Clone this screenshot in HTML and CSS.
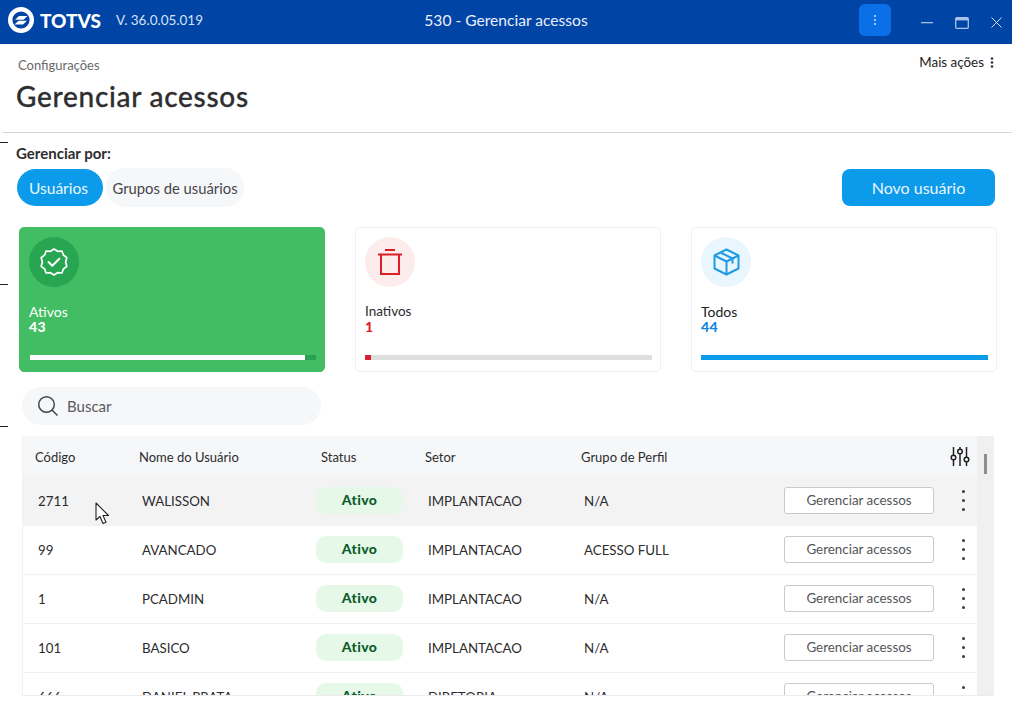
FILE: index.html
```html
<!DOCTYPE html>
<html lang="pt-BR">
<head>
<meta charset="utf-8">
<title>530 - Gerenciar acessos</title>
<link rel="stylesheet" href="styles.css">
</head>
<body>
<div class="ticks"><i></i><i></i><i></i></div>
<header class="titlebar">
  <div class="brand">
    <svg class="logo" width="26" height="26" viewBox="0 0 26 26"><circle cx="13" cy="13" r="10.800" fill="none" stroke="#fff" stroke-width="4.400"/><path d="M7 12.800 L11 9 H19.500 L15.500 12.800Z M19 13.800 L15 17.500 H6.500 L10.500 13.800Z" fill="#fff"/></svg>
    <span class="wordmark">TOTVS</span>
    <span class="version">V. 36.0.05.019</span>
  </div>
  <div class="apptitle">530 - Gerenciar acessos</div>
  <div class="winctl">
    <button class="menu-btn"><svg width="2" height="10" viewBox="0 0 2 10"><g fill="#9cc6f5"><rect y="0" width="2" height="2"/><rect y="4" width="2" height="2"/><rect y="8" width="2" height="2"/></g></svg></button>
    <svg class="ctl-min" width="12" height="2" viewBox="0 0 12 2"><rect width="12" height="1.300" fill="#a9bde0"/></svg>
    <svg class="ctl-max" width="14" height="12" viewBox="0 0 14 12"><rect x=".7" y=".7" width="12.600" height="10.600" rx="1" fill="none" stroke="#a9c2ea" stroke-width="1.300"/><rect x="1" y="1" width="12" height="2.400" fill="#a9c2ea"/></svg>
    <svg class="ctl-close" width="11" height="11" viewBox="0 0 11 11"><path d="M.5.5l10 10M10.500.5l-10 10" stroke="#d5e0f3" stroke-width="1"/></svg>
  </div>
</header>

<section class="pagehead">
  <div>
    <div class="crumb">Configurações</div>
    <h1>Gerenciar acessos</h1>
  </div>
  <div class="more">Mais ações
    <svg width="4" height="11" viewBox="0 0 4 11"><g fill="#333"><circle cx="2" cy="1.500" r="1.300"/><circle cx="2" cy="5.500" r="1.300"/><circle cx="2" cy="9.500" r="1.300"/></g></svg>
  </div>
</section>

<section class="manage">
  <div>
    <div class="manage-label">Gerenciar por:</div>
    <div class="tabs">
      <span class="tab tab-on">Usuários</span>
      <span class="tab tab-off">Grupos de usuários</span>
    </div>
  </div>
  <button class="primary">Novo usuário</button>
</section>

<section class="cards">
  <article class="card card-green">
    <div class="disc disc-green">
      <svg width="30" height="30" viewBox="0 0 30 30" fill="none" stroke="#fff" stroke-width="1.700" stroke-linejoin="round" stroke-linecap="round"><path d="M15 2l3.600 2.300 4.300-.3 1.500 4 3.400 2.700-1.200 4.300 1.200 4.300-3.400 2.700-1.500 4-4.300-.3L15 28l-3.600-2.300-4.300.3-1.500-4-3.400-2.700 1.200-4.300-1.200-4.300 3.400-2.700 1.500-4 4.300.3z"/><path d="M9.500 15l3.800 3.800 7-7" stroke-width="2"/></svg>
    </div>
    <div class="card-label">Ativos</div>
    <div class="card-num">43</div>
    <div class="track track-green"><div class="fill fill-white bar-97"></div></div>
  </article>
  <article class="card">
    <div class="disc disc-red">
      <svg width="24" height="26" viewBox="0 0 24 26" fill="none" stroke="#dc1f26" stroke-width="2"><path d="M0 5.500h24M7 1h10"/><path d="M3 5.500V25h18V5.500"/></svg>
    </div>
    <div class="card-label card-label-narrow">Inativos</div>
    <div class="card-num num-red">1</div>
    <div class="track track-grey"><div class="fill fill-red bar-2"></div></div>
  </article>
  <article class="card">
    <div class="disc disc-blue">
      <svg width="27" height="28" viewBox="0 0 27 28" fill="none" stroke="#1f9be2" stroke-width="2" stroke-linejoin="round"><path d="M13.500 1.500l12 6v13l-12 6-12-6v-13z"/><path d="M1.500 7.500l12 6 12-6M13.500 13.500v13"/><path d="M7.500 4.500l12 6v5"/></svg>
    </div>
    <div class="card-label label-dark">Todos</div>
    <div class="card-num num-blue">44</div>
    <div class="track"><div class="fill fill-blue bar-100"></div></div>
  </article>
</section>

<div class="search">
  <svg width="22" height="22" viewBox="0 0 22 22" fill="none" stroke="#444" stroke-width="1.500"><circle cx="9.500" cy="9.500" r="7.800"/><path d="M15 15l5.500 5.500"/></svg>
  <span>Buscar</span>
</div>

<section class="tablewrap">
  <div class="table">
    <div class="row row-head">
      <div>Código</div><div>Nome do Usuário</div><div>Status</div><div>Setor</div><div>Grupo de Perfil</div>
      <div class="head-tools">
        <svg width="20" height="19" viewBox="0 0 20 19" fill="none" stroke="#222" stroke-width="1.500"><path d="M3.500 0v8M3.500 13v6M10 0v2M10 7v12M16.500 0v10M16.500 15v4"/><circle cx="3.500" cy="10.500" r="2.300"/><circle cx="10" cy="4.500" r="2.300"/><circle cx="16.500" cy="12.500" r="2.300"/></svg>
      </div>
    </div>
    <div class="row row-hover">
      <div>2711</div><div>WALISSON</div><div><span class="pill">Ativo</span></div><div>IMPLANTACAO</div><div>N/A</div>
      <div class="actions"><button class="ghost">Gerenciar acessos</button><span class="dots"><i></i><i></i><i></i></span></div>
    </div>
    <div class="row">
      <div>99</div><div>AVANCADO</div><div><span class="pill">Ativo</span></div><div>IMPLANTACAO</div><div>ACESSO FULL</div>
      <div class="actions"><button class="ghost">Gerenciar acessos</button><span class="dots"><i></i><i></i><i></i></span></div>
    </div>
    <div class="row">
      <div>1</div><div>PCADMIN</div><div><span class="pill">Ativo</span></div><div>IMPLANTACAO</div><div>N/A</div>
      <div class="actions"><button class="ghost">Gerenciar acessos</button><span class="dots"><i></i><i></i><i></i></span></div>
    </div>
    <div class="row">
      <div>101</div><div>BASICO</div><div><span class="pill">Ativo</span></div><div>IMPLANTACAO</div><div>N/A</div>
      <div class="actions"><button class="ghost">Gerenciar acessos</button><span class="dots"><i></i><i></i><i></i></span></div>
    </div>
    <div class="row">
      <div>666</div><div>DANIEL PRATA</div><div><span class="pill">Ativo</span></div><div>DIRETORIA</div><div>N/A</div>
      <div class="actions"><button class="ghost">Gerenciar acessos</button><span class="dots"><i></i><i></i><i></i></span></div>
    </div>
  </div>
  <div class="scrollbar"><div class="thumb"></div></div>
</section>

<svg class="cursor" width="16" height="24" viewBox="0 0 16 24"><path d="M1 1v17l4-3.500 3 7 3-1.300-3-6.700h5.500z" fill="#fff" stroke="#222" stroke-width="1.100" stroke-linejoin="round"/></svg>
</body>
</html>
```
FILE: styles.css
```css
* { box-sizing: border-box; }
html, body { margin: 0; height: 100%; }
body {
  position: relative;
  width: 1012px;
  height: 704px;
  overflow: hidden;
  background: #fff;
  color: #2c2c2e;
  font-family: Lato, "Noto Sans", sans-serif;
  font-size: 14px;
}
button { font-family: inherit; cursor: pointer; }

.ticks i {
  position: absolute;
  left: 0;
  width: 8px;
  height: 1px;
  background: #222;
}
.ticks i:nth-child(1) { top: 142px; }
.ticks i:nth-child(2) { top: 284px; }
.ticks i:nth-child(3) { top: 426px; }

.titlebar {
  position: relative;
  height: 44px;
  padding-bottom: 4px;
  background: #0044a6;
  color: #fff;
  display: flex;
  align-items: center;
  justify-content: space-between;
}
.brand { display: flex; align-items: center; padding-left: 8px; }
.wordmark {
  margin-left: 6px;
  font-weight: 900;
  font-size: 19px;
  letter-spacing: 0;
  width: 68px;
}
.version { margin-left: 8px; font-size: 13.500px; color: #d6e2f5; }
.apptitle {
  position: absolute;
  left: 0;
  right: 0;
  text-align: center;
  font-size: 15.600px;
  color: #eaf0fa;
}
.winctl { display: flex; align-items: center; padding-right: 10px; position: relative; }
.menu-btn {
  width: 32px;
  height: 32px;
  border: 0;
  border-radius: 6px;
  background: #0b6fe8;
  display: flex;
  align-items: center;
  justify-content: center;
}
.ctl-min { margin: 6px 0 0 30px; }
.ctl-max { margin: 6px 0 0 22px; }
.ctl-close { margin: 5px 0 0 22px; }

.pagehead {
  height: 89px;
  margin-left: 3px;
  border-bottom: 1px solid #d6d4df;
  padding: 0 18px 0 13px;
  display: flex;
  justify-content: space-between;
}
.crumb { margin: 13px 0 0 2px; font-size: 13px; line-height: 16px; color: #6a6a6a; }
h1 {
  margin: 7px 0 0;
  font-size: 28px;
  line-height: 32px;
  font-weight: 500;
  color: #2e2e30;
  letter-spacing: .72px;
  -webkit-text-stroke: .3px #2e2e30;
}
.more { margin-top: 10px; font-size: 13.400px; line-height: 16px; color: #222; display: flex; align-items: center; gap: 6px; height: 16px; }

.manage {
  padding: 12px 17px 0 16px;
  height: 94px;
  display: flex;
  justify-content: space-between;
  align-items: flex-start;
}
.manage-label { font-weight: 700; font-size: 15px; line-height: 17px; color: #2e2e30; }
.tabs { display: flex; align-items: center; margin-top: 6px; margin-left: 1px; }
.tab { display: flex; align-items: center; justify-content: center; border-radius: 19px; }
.tab-on { width: 86px; height: 37px; padding-right: 3px; background: #0c9aea; color: #eaf6fe; font-size: 15.500px; }
.tab-off { width: 138px; height: 39px; margin-left: 3px; background: #f6f7f9; color: #45454a; font-size: 14.800px; }
.primary {
  margin-top: 24px;
  width: 153px;
  height: 37px;
  border: 0;
  border-radius: 8px;
  background: #0c9aea;
  color: #eaf6fe;
  font-size: 16px;
}

.cards { display: flex; gap: 30px; padding-left: 19px; height: 146px; }
.card {
  width: 306px;
  height: 145px;
  border: 1px solid #f0f0f2;
  border-radius: 5px;
  padding: 9px 9px 0;
  background: #fff;
}
.card-green { background: #42bd64; border-color: #42bd64; color: #fff; }
.disc { width: 50px; height: 50px; border-radius: 50%; display: flex; align-items: center; justify-content: center; }
.disc-green { background: #28a550; }
.disc-red { background: #fdecec; }
.disc-blue { background: #e9f6fd; }
.card-label { margin-top: 16px; font-size: 14px; line-height: 17px; }
.card-label-narrow { font-size: 13.500px; }
.label-dark { color: #222; }
.card-num { font-weight: 900; font-size: 14px; line-height: 13px; letter-spacing: .5px; }
.num-red { color: #dc1f26; }
.num-blue { color: #1188dc; }
.track { margin-top: 22px; height: 5px; width: 287px; }
.track-green { background: #27a350; width: 286px; margin-left: 1px; }
.track-grey { background: #dedede; }
.fill { height: 5px; }
.fill-white { background: #fff; }
.fill-red { background: #d8232a; }
.fill-blue { background: #0c9aea; }
.bar-97 { width: 96.300%; }
.bar-2 { width: 2%; }
.bar-100 { width: 100%; }

.search {
  margin: 14px 0 0 22px;
  width: 299px;
  height: 38px;
  border-radius: 19px;
  background: #f6f7f9;
  display: flex;
  align-items: center;
  padding-left: 15px;
  gap: 8px;
  font-size: 15px;
  color: #5a5a5e;
}

.tablewrap {
  margin: 11px 0 0 22px;
  width: 972px;
  height: 260px;
  display: flex;
  overflow: hidden;
  border-bottom: 1px solid #ececef;
}
.table { width: 955px; border-left: 1px solid #f0f0f2; flex: none; }
.row {
  display: grid;
  grid-template-columns: 104px 182px 104px 156px 156px 1fr;
  height: 49px;
  padding-bottom: 2px;
  align-items: center;
  border-bottom: 1px solid #f1f1f3;
  font-size: 13.300px;
  color: #2c2c2e;
}
.row > div { padding: 2px 0 0 15px; min-width: 0; white-space: nowrap; }
.row > div:nth-child(3) { padding: 0 0 0 7px; }
.row > .actions { padding: 0; }
.row-head { height: 41px; padding-bottom: 0; background: #f6f7f9; border-bottom: 0; font-size: 13px; }
.row-head > div { padding: 0 0 0 12px; }
.row-head > div:nth-child(3) { padding: 0 0 0 12px; }
.row-head > .head-tools { padding: 0 7px 0 0; display: flex; justify-content: flex-end; }
.row-hover { background: #f3f3f3; border-bottom-color: #f3f3f3; }
.pill {
  display: flex;
  align-items: center;
  justify-content: center;
  width: 87px;
  height: 27px;
  padding-bottom: 2px;
  border-radius: 10px;
  background: #e6f9e8;
  color: #0e5c2c;
  font-weight: 900;
  font-size: 14px;
  letter-spacing: .4px;
}
.actions { display: flex; align-items: center; justify-content: flex-end; position: relative; }
.ghost {
  width: 150px;
  height: 27px;
  margin-right: 43px;
  padding: 0;
  background: #fff;
  border: 1px solid #c9c9cd;
  border-radius: 3px;
  color: #55555a;
  font-size: 13.400px;
}
.dots {
  position: absolute;
  right: 12px;
  top: 50%;
  margin-top: -10px;
  display: flex;
  flex-direction: column;
  gap: 6px;
}
.dots i { width: 3px; height: 3px; border-radius: 50%; background: #3a3a3a; }
.scrollbar { width: 17px; background: #f0f0f0; position: relative; }
.thumb { position: absolute; left: 7px; top: 18px; width: 3px; height: 20px; background: #8e8e8e; }
.cursor { position: absolute; left: 95px; top: 502px; }
```
